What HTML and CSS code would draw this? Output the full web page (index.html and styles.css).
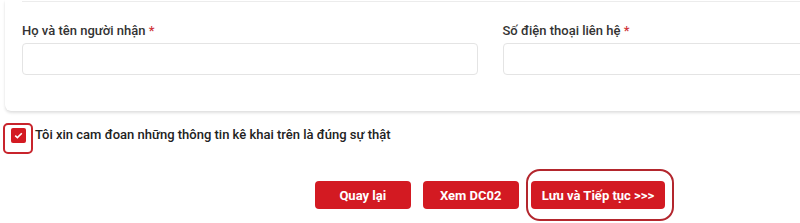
FILE: index.html
```html
<!DOCTYPE html>
<html lang="vi">
<head>
    <meta charset="UTF-8">
    <meta name="viewport" content="width=device-width, initial-scale=1.0">
    <title>Thông tin người nhận</title>
    <link rel="stylesheet" href="styles.css">
</head>
<body>
    <div class="page">
        <div class="card">
            <div class="prev-field"></div>
            <div class="form-row">
                <div class="form-group">
                    <label>Họ và tên người nhận <span class="req">*</span></label>
                    <input type="text">
                </div>
                <div class="form-group">
                    <label>Số điện thoại liên hệ <span class="req">*</span></label>
                    <input type="text">
                </div>
            </div>
        </div>

        <div class="confirm">
            <span class="mark-box">
                <span class="check">
                    <svg width="9" height="7" viewBox="0 0 9 7"><path d="M1.2 3.6 L3.4 5.6 L7.8 1.2" fill="none" stroke="#fff" stroke-width="1.6"/></svg>
                </span>
            </span>
            <span class="confirm-text">Tôi xin cam đoan những thông tin kê khai trên là đúng sự thật</span>
        </div>

        <div class="actions">
            <button class="btn">Quay lại</button>
            <button class="btn">Xem DC02</button>
            <span class="ring-wrap">
                <button class="btn">Lưu và Tiếp tục &gt;&gt;&gt;</button>
                <span class="mark-ring"></span>
            </span>
        </div>
    </div>
</body>
</html>
```

FILE: styles.css
```css
body {
    margin: 0;
    padding: 0;
    background: #fff;
    font-family: Roboto, "Noto Sans", sans-serif;
    color: #222;
    overflow: hidden;
    width: 800px;
    height: 223px;
}

.page {
    width: 970px;
    margin-left: 5px;
}

.card {
    background: #fff;
    border-radius: 0 0 6px 6px;
    box-shadow: 0 2px 3px rgba(0, 0, 0, 0.12), 0 0 1px rgba(0, 0, 0, 0.08);
    padding: 0 17px 36px 17px;
}

.prev-field {
    height: 1px;
    border-bottom: 1px solid #ececec;
}

.form-row {
    display: flex;
    gap: 25px;
    padding-top: 20px;
}

.form-group {
    width: 456px;
    display: flex;
    flex-direction: column;
}

.form-group label {
    font-size: 13px;
    line-height: 17px;
    font-weight: 500;
    color: #333;
    margin-bottom: 4px;
}

.req {
    color: #d0343a;
}

.form-group input {
    height: 32px;
    box-sizing: border-box;
    border: 1px solid #e4e4e4;
    border-radius: 4px;
    background: #fff;
    outline: none;
}

.confirm {
    display: flex;
    align-items: center;
    margin-top: 12px;
    margin-left: -2px;
}

.mark-box {
    width: 26px;
    height: 27px;
    border: 2px solid #c8242c;
    border-radius: 5px;
    display: flex;
    align-items: center;
    justify-content: center;
}

.check {
    width: 15px;
    height: 15px;
    background: #d31a22;
    border-radius: 2px;
    display: flex;
    align-items: center;
    justify-content: center;
    margin-top: -6px;
}

.confirm-text {
    font-size: 13px;
    font-weight: 500;
    color: #222;
    margin-left: 2px;
    margin-top: -8px;
}

.actions {
    display: flex;
    justify-content: center;
    align-items: center;
    gap: 12px;
    margin-top: 27px;
}

.btn {
    display: block;
    height: 28px;
    min-width: 96px;
    padding: 0 11px;
    border: none;
    border-radius: 4px;
    background: #d31a22;
    color: #fff;
    font-family: Roboto, "Noto Sans", sans-serif;
    font-size: 13px;
    font-weight: bold;
    cursor: pointer;
}

.ring-wrap {
    position: relative;
}

.mark-ring {
    position: absolute;
    top: -12px;
    bottom: -12px;
    left: -5px;
    right: -9px;
    border: 2px solid #b3262d;
    border-radius: 14px;
    pointer-events: none;
}
```
